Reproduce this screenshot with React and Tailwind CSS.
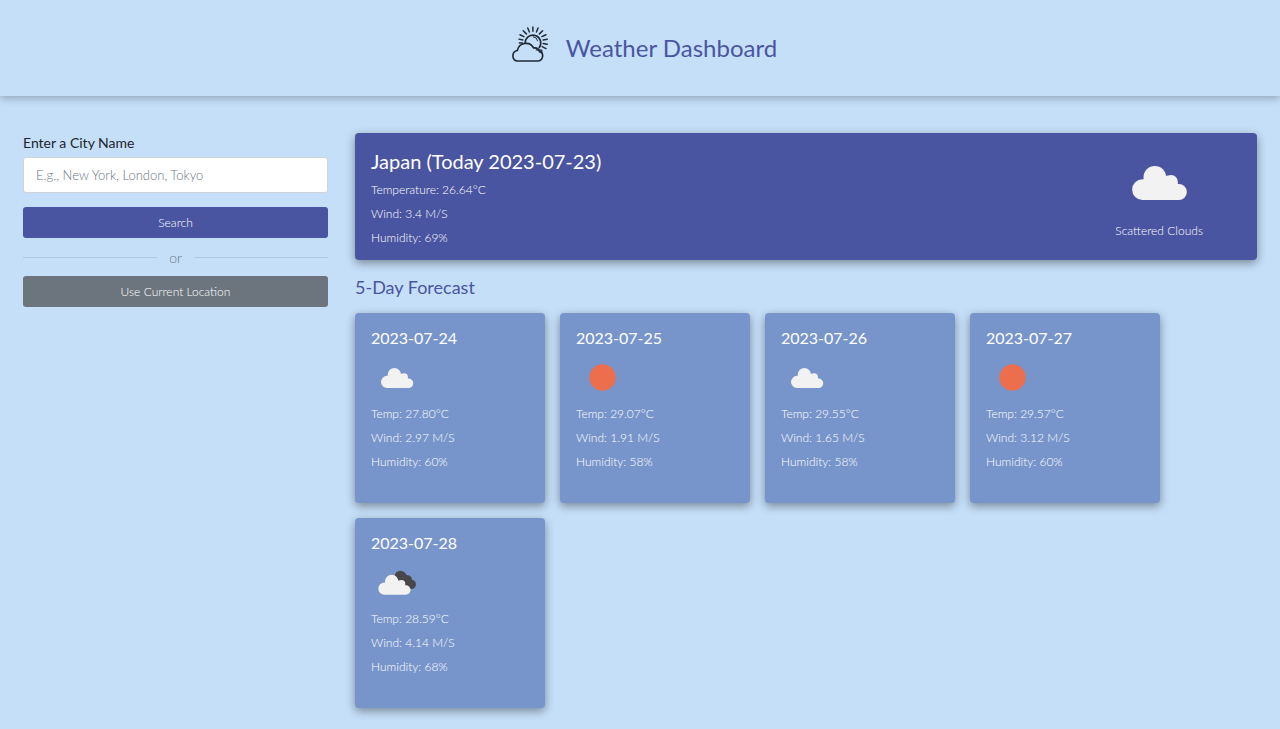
const forecast = [
  { date: "2023-07-24", icon: "cloud", temp: "27.80", wind: "2.97", humidity: 60 },
  { date: "2023-07-25", icon: "sun", temp: "29.07", wind: "1.91", humidity: 58 },
  { date: "2023-07-26", icon: "cloud", temp: "29.55", wind: "1.65", humidity: 58 },
  { date: "2023-07-27", icon: "sun", temp: "29.57", wind: "3.12", humidity: 60 },
  { date: "2023-07-28", icon: "broken", temp: "28.59", wind: "4.14", humidity: 68 },
];

function CloudShape() {
  return (
    <g fill="#f2f2f2">
      <circle cx="68" cy="34" r="34" />
      <path d="M31 102a31 31 0 0 1 0-62h60v-5q12-8 26-8a20 20 0 0 1 20 20v7h3a24 24 0 0 1 0 48Z" />
    </g>
  );
}

function Cloud({ className }) {
  return (
    <svg viewBox="0 0 164 102" className={className} aria-hidden="true">
      <CloudShape />
    </svg>
  );
}

function ForecastIcon({ kind }) {
  if (kind === "sun") {
    return (
      <svg viewBox="0 0 54 54" className="size-[54px]" aria-hidden="true">
        <circle cx="26.5" cy="26.5" r="13.2" fill="#ec6e4c" />
      </svg>
    );
  }
  if (kind === "broken") {
    return (
      <svg viewBox="0 0 162 162" className="size-[54px]" aria-hidden="true">
        <g fill="#48484a">
          <circle cx="88" cy="61" r="17" />
          <circle cx="110" cy="71" r="13" />
          <circle cx="121" cy="85" r="14" />
          <path d="M75 65 L99 49 L123 73 L121 99 L107 99 Z" />
        </g>
        <g transform="translate(22 56) scale(0.59)">
          <CloudShape />
        </g>
      </svg>
    );
  }
  return (
    <svg viewBox="0 0 162 162" className="size-[54px]" aria-hidden="true">
      <g transform="translate(30 51) scale(0.59)">
        <CloudShape />
      </g>
    </svg>
  );
}

function Logo() {
  return (
    <svg
      viewBox="0 0 38 37"
      className="mb-2 h-9 w-[37px]"
      fill="none"
      stroke="#1f2a35"
      strokeWidth="1.7"
      strokeLinecap="round"
      strokeLinejoin="round"
      aria-hidden="true"
    >
      <path d="M6.3 36h21a5.2 5.2 0 0 0 2-10a5.4 5.4 0 0 0-6-3.4a9 9 0 0 0-16.8 2.6a5.5 5.5 0 0 0-.2 10.8Z" />
      <path d="M14.6 17.6a8 8 0 1 1 14.4 4.6" />
      <path d="M22.8 11a5.2 5.2 0 0 1 4.6 4.2" strokeWidth="1" />
      <path d="M26 24.6l5.6 .2M29 26.4l2.6 1.2M31.6 24.8v2.6" strokeWidth="1.3" />
      <path d="M22.5 5.5V1M18.9 6.2L17.2 2M26.1 6.2L27.8 2M15.8 8.1L12.5 4.8M29.2 8.1L32.5 4.8M13.2 11L9.2 9M31.8 11L35.9 9M12.2 14.3L8.2 13.5M33 14.3L37.2 13.6M33 18L37.2 18.8M12 17.4H8.6M32 21.2L35.9 23.2" strokeWidth="1.5" />
    </svg>
  );
}

export default function App() {
  return (
    <div className="min-h-screen bg-[#c5dff8] font-['Lato',sans-serif] font-light text-[#212529]">
      <header className="flex h-24 items-center justify-center gap-[18px] pl-2 shadow-[0_2px_8px_rgba(0,0,0,0.28)]">
        <Logo />
        <h1 className="text-[24px] font-normal text-[#4a55a2]">Weather Dashboard</h1>
      </header>

      <div className="grid grid-cols-[305fr_902fr] gap-[27px] px-[23px] pt-[37px] pb-5">
        <form onSubmit={(e) => e.preventDefault()}>
          <label htmlFor="city" className="block text-[14px] leading-5 font-normal">
            Enter a City Name
          </label>
          <input
            id="city"
            type="text"
            placeholder="E.g., New York, London, Tokyo"
            className="mt-1 block h-9 w-full rounded-[3px] border border-[#ced4da] bg-white px-3 text-[13px] outline-none placeholder:text-[#6c757d]"
          />
          <button
            type="submit"
            className="mt-[14px] h-[31px] w-full rounded-[3px] bg-[#4a55a2] text-[12px] text-white"
          >
            Search
          </button>
          <div className="flex h-[38px] items-center gap-3 text-[14px] text-[#6c757d]">
            <span className="h-px flex-1 bg-[#afc8e0]" />
            or
            <span className="h-px flex-1 bg-[#afc8e0]" />
          </div>
          <button
            type="button"
            className="h-[31px] w-full rounded-[3px] bg-[#6c757d] text-[12px] text-white"
          >
            Use Current Location
          </button>
        </form>

        <main>
          <section className="flex items-center justify-between rounded bg-[#4a55a2] pt-3 pr-[54px] pb-[13px] pl-4 text-[12px] text-white shadow-[0_3px_10px_rgba(0,0,0,0.4)]">
            <div>
              <h2 className="mb-1 text-[20px] leading-8 font-normal">
                Japan (Today 2023-07-23)
              </h2>
              <p className="leading-[18px]">Temperature: 26.64°C</p>
              <p className="mt-[6px] leading-[18px]">Wind: 3.4 M/S</p>
              <p className="mt-[6px] leading-[18px]">Humidity: 69%</p>
            </div>
            <div className="flex flex-col items-center gap-[22px] pt-[14px]">
              <Cloud className="h-[34px] w-[55px]" />
              <p className="leading-[18px]">Scattered Clouds</p>
            </div>
          </section>

          <h2 className="mt-3 text-[18px] leading-[30px] font-normal text-[#4a55a2]">
            5-Day Forecast
          </h2>

          <ul className="mt-[11px] flex flex-wrap gap-[15px]">
            {forecast.map((day) => (
              <li
                key={day.date}
                className="h-[190px] w-[190px] rounded bg-[#7895cb] px-4 pt-3 text-[12px] text-white shadow-[0_3px_10px_rgba(0,0,0,0.4)]"
              >
                <h3 className="text-[16px] leading-[26px] font-normal">{day.date}</h3>
                <ForecastIcon kind={day.icon} />
                <p className="leading-[18px]">Temp: {day.temp}°C</p>
                <p className="mt-[6px] leading-[18px]">Wind: {day.wind} M/S</p>
                <p className="mt-[6px] leading-[18px]">Humidity: {day.humidity}%</p>
              </li>
            ))}
          </ul>
        </main>
      </div>
    </div>
  );
}
